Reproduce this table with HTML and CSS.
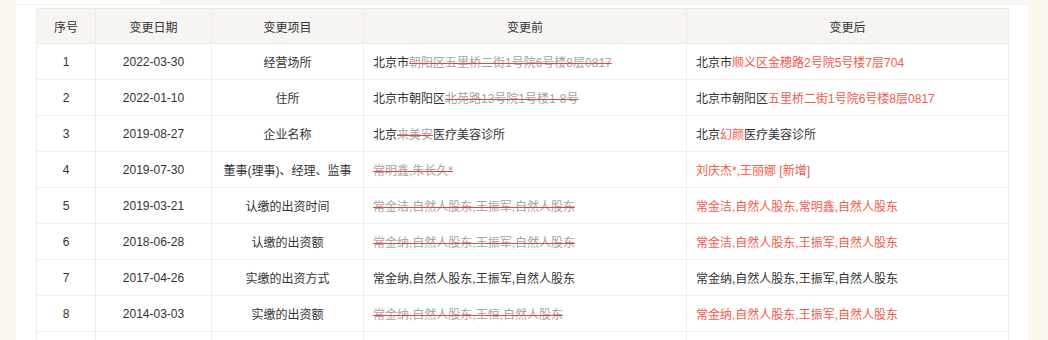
FILE: index.html
```html
<!DOCTYPE html>
<html lang="zh-CN">
<head>
<meta charset="utf-8">
<title>变更记录</title>
<link rel="stylesheet" href="styles.css">
</head>
<body>
<div class="panel">
  <div class="tabbar">
    <div class="tab active"></div>
    <div class="tab rest"></div>
  </div>
  <table class="changes">
    <colgroup>
      <col class="c-no"><col class="c-date"><col class="c-item"><col class="c-before"><col class="c-after">
    </colgroup>
    <thead>
      <tr><th>序号</th><th>变更日期</th><th>变更项目</th><th>变更前</th><th>变更后</th></tr>
    </thead>
    <tbody>
      <tr><td>1</td><td>2022-03-30</td><td>经营场所</td>
        <td class="txt">北京市<del>朝阳区五里桥二街1号院6号楼8层0817</del></td>
        <td class="txt">北京市<em>顺义区金穗路2号院5号楼7层704</em></td></tr>
      <tr><td>2</td><td>2022-01-10</td><td>住所</td>
        <td class="txt">北京市朝阳区<del>北苑路13号院1号楼1-8号</del></td>
        <td class="txt">北京市朝阳区<em>五里桥二街1号院6号楼8层0817</em></td></tr>
      <tr><td>3</td><td>2019-08-27</td><td>企业名称</td>
        <td class="txt">北京<del>来美安</del>医疗美容诊所</td>
        <td class="txt">北京<em>幻颜</em>医疗美容诊所</td></tr>
      <tr><td>4</td><td>2019-07-30</td><td>董事(理事)、经理、监事</td>
        <td class="txt"><del>常明鑫,朱长久*</del></td>
        <td class="txt"><em>刘庆杰*,王丽娜 [新增]</em></td></tr>
      <tr><td>5</td><td>2019-03-21</td><td>认缴的出资时间</td>
        <td class="txt"><del>常金洁,自然人股东,王振军,自然人股东</del></td>
        <td class="txt"><em>常金洁,自然人股东,常明鑫,自然人股东</em></td></tr>
      <tr><td>6</td><td>2018-06-28</td><td>认缴的出资额</td>
        <td class="txt"><del>常金纳,自然人股东,王振军,自然人股东</del></td>
        <td class="txt"><em>常金洁,自然人股东,王振军,自然人股东</em></td></tr>
      <tr><td>7</td><td>2017-04-26</td><td>实缴的出资方式</td>
        <td class="txt">常金纳,自然人股东,王振军,自然人股东</td>
        <td class="txt">常金纳,自然人股东,王振军,自然人股东</td></tr>
      <tr><td>8</td><td>2014-03-03</td><td>实缴的出资额</td>
        <td class="txt"><del>常金纳,自然人股东,王恒,自然人股东</del></td>
        <td class="txt"><em>常金纳,自然人股东,王振军,自然人股东</em></td></tr>
      <tr class="more"><td></td><td></td><td></td><td class="txt"></td><td class="txt"></td></tr>
    </tbody>
  </table>
</div>
</body>
</html>
```
FILE: styles.css
```css
html, body {
  margin: 0;
  padding: 0;
}
body {
  background: #faf7ee;
  font-family: "Liberation Sans", Arial, "Noto Sans CJK SC", sans-serif;
  font-size: 12px;
  color: #333;
}
.panel {
  margin: 0 20px 0 16px;
  background: #fff;
  padding: 0 20px 20px 20px;
  width: 972px;
}
.tabbar {
  display: flex;
  height: 4px;
  border-bottom: 1px solid #efefef;
  margin: 0 -20px 3px -20px;
}
.tab.active {
  width: 144px;
  background: #fff;
}
.tab.rest {
  flex: 1;
  background: #f8f8f8;
  border-left: 1px solid #f0f0f0;
}
.changes {
  width: 972px;
  table-layout: fixed;
  border-collapse: collapse;
  border: 1px solid #f1ebdf;
}
.c-no { width: 59px; }
.c-date { width: 116px; }
.c-item { width: 152px; }
.c-before { width: 323px; }
.c-after { width: 322px; }
.changes th {
  height: 34px;
  padding: 0;
  background: #f6f5f1;
  font-weight: normal;
  color: #333;
  border: 1px solid #f1ebdf;
  text-align: center;
}
.changes td {
  height: 35px;
  padding: 0;
  border: 1px solid #f3ede3;
  text-align: center;
  color: #333;
}
.changes td.txt {
  text-align: left;
  padding-left: 9px;
}
.changes del {
  color: #a3a3a3;
  text-decoration: line-through;
  text-decoration-color: #e8473a;
  text-decoration-thickness: 1px;
}
.changes em {
  font-style: normal;
  color: #f25a4c;
}
```
